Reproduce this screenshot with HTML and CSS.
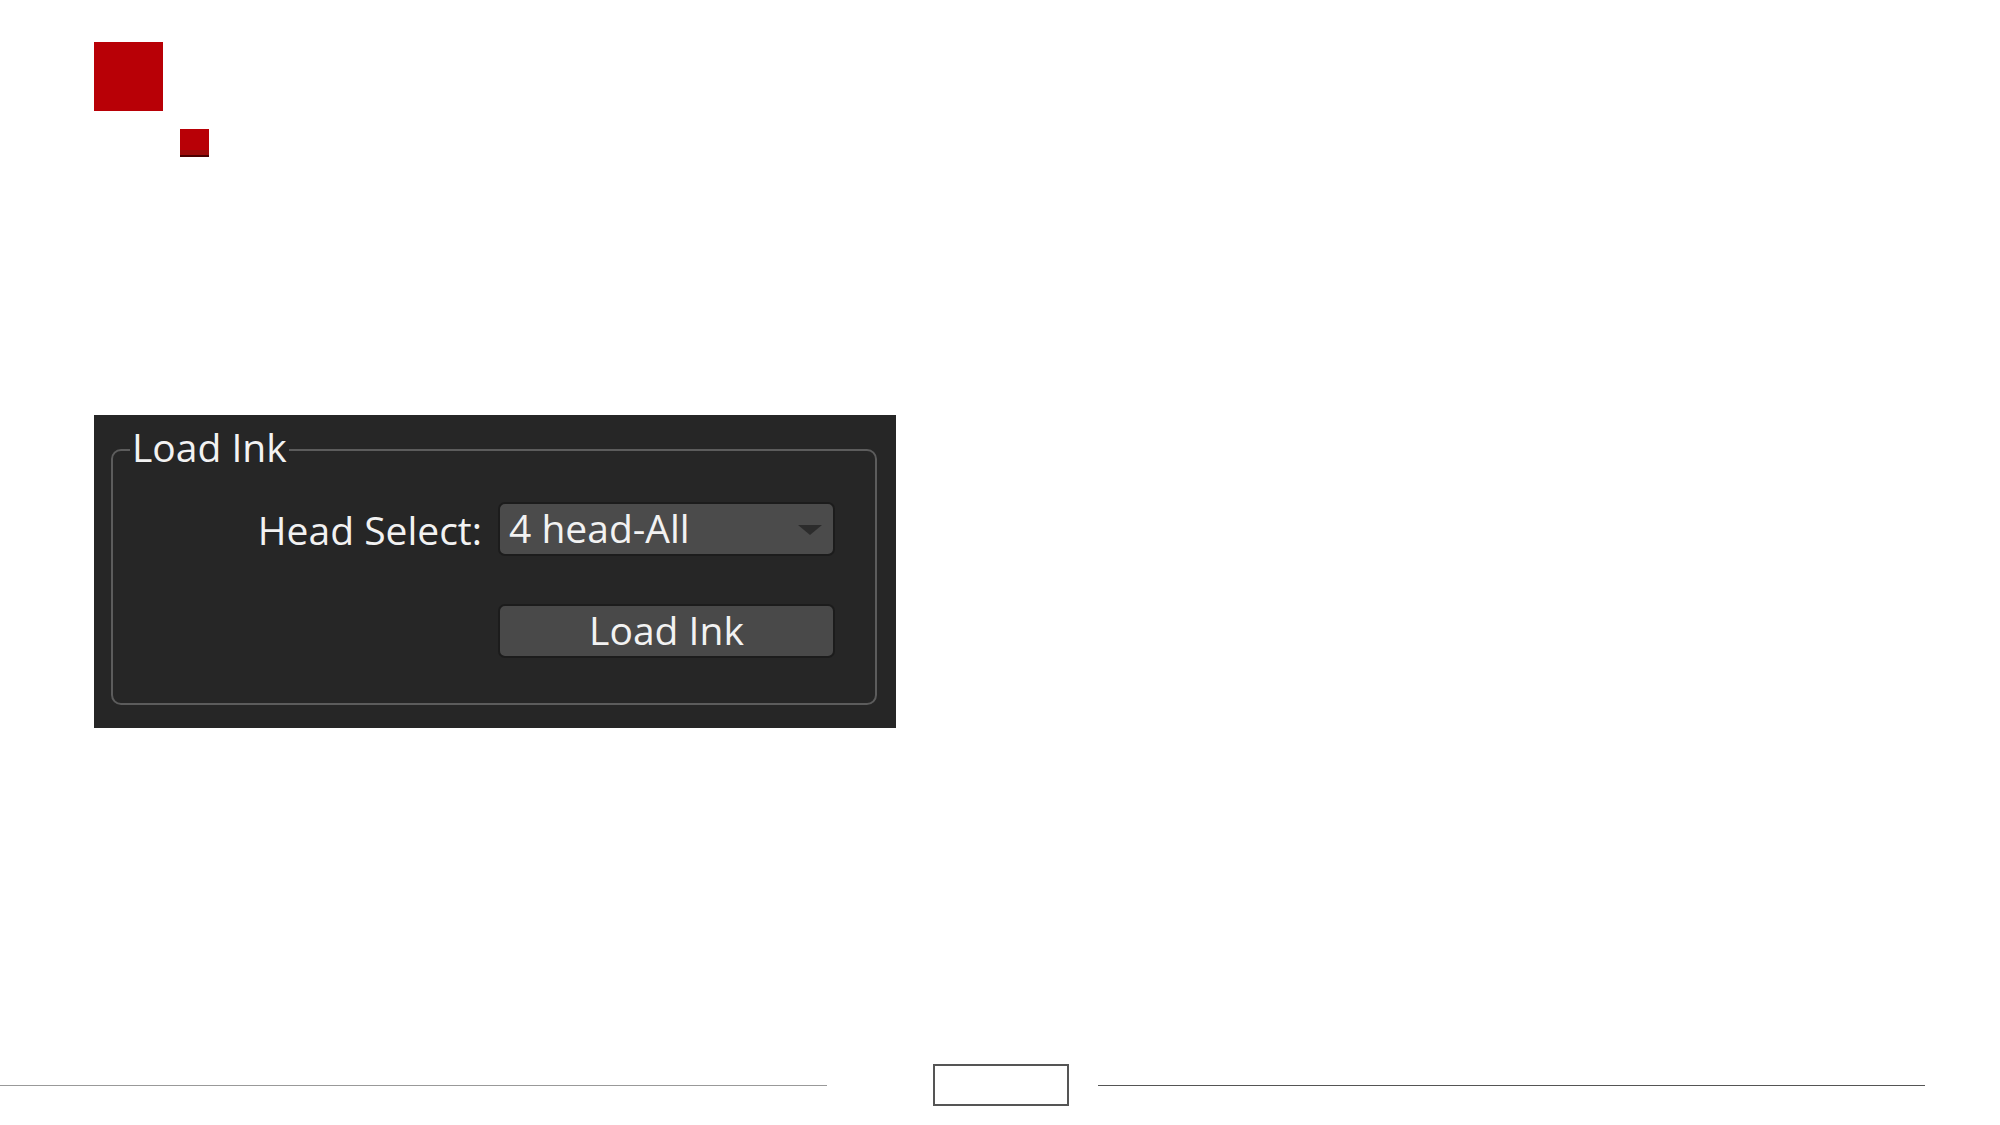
FILE: index.html
```html
<!DOCTYPE html>
<html lang="en">

<head>
    <meta charset="UTF-8">
    <meta name="viewport" content="width=device-width, initial-scale=1.0">
    <title>Load Ink</title>
    <link rel="stylesheet" href="styles.css">
</head>

<body>
    <div class="page">
        <div class="head">
            <div class="mark-big"></div>
            <div class="mark-small"></div>
        </div>

        <div class="panel">
            <fieldset class="group">
                <legend>Load Ink</legend>
                <div class="row">
                    <span class="label">Head Select:</span>
                    <div class="select">
                        <span>4 head-All</span>
                        <span class="arrow"></span>
                    </div>
                </div>
                <div class="row">
                    <button class="btn">Load Ink</button>
                </div>
            </fieldset>
        </div>

        <div class="footer">
            <div class="line line-left"></div>
            <div class="page-box"></div>
            <div class="line line-right"></div>
        </div>
    </div>
</body>

</html>
```

FILE: styles.css
```css
body {
    margin: 0;
    background-color: #ffffff;
    font-family: "Open Sans", "Noto Sans", sans-serif;
}

.page {
    height: 1125px;
    display: flex;
    flex-direction: column;
}

.head {
    padding-left: 94px;
    padding-top: 42px;
}

.mark-big {
    width: 69px;
    height: 69px;
    background-color: #b80006;
}

.mark-small {
    width: 29px;
    height: 26px;
    margin-top: 18px;
    margin-left: 86px;
    background: linear-gradient(#b80006 82%, #9c0b0b 82%);
    border-bottom: 2px solid #4a0000;
}

.panel {
    width: 802px;
    height: 313px;
    box-sizing: border-box;
    margin-top: 258px;
    margin-left: 94px;
    padding: 12px 19px 23px 17px;
    background-color: #262626;
}

.group {
    margin: 0;
    min-width: 0;
    height: 100%;
    box-sizing: border-box;
    padding: 0 40px 0 0;
    border: 2px solid #5c5c5c;
    border-radius: 10px;
}

.group legend {
    margin-left: 17px;
    padding: 0 2px 6px 2px;
    font-size: 39px;
    line-height: 40px;
    color: #f2f2f2;
}

.row {
    display: flex;
    justify-content: flex-end;
    align-items: center;
    gap: 16px;
}

.row:first-of-type {
    margin-top: 29px;
}

.row + .row {
    margin-top: 48px;
}

.label {
    font-size: 39px;
    color: #f2f2f2;
}

.select {
    width: 337px;
    height: 54px;
    box-sizing: border-box;
    display: flex;
    align-items: center;
    justify-content: space-between;
    padding: 0 11px 4px 9px;
    background-color: #4b4b4b;
    border: 2px solid #1c1c1c;
    border-radius: 7px;
    font-size: 39px;
    color: #f2f2f2;
}

.arrow {
    width: 0;
    height: 0;
    margin-top: 6px;
    border-left: 12px solid transparent;
    border-right: 12px solid transparent;
    border-top: 10px solid #2c2c2c;
}

.btn {
    width: 337px;
    height: 54px;
    padding: 0 0 4px 0;
    background-color: #494949;
    border: 2px solid #1c1c1c;
    border-radius: 7px;
    font-family: inherit;
    font-size: 39px;
    line-height: 1;
    color: #f2f2f2;
}

.footer {
    margin-top: auto;
    margin-bottom: 19px;
    display: flex;
    align-items: center;
}

.line {
    width: 827px;
    height: 1px;
}

.line-left {
    background-color: #999999;
}

.line-right {
    margin-left: 29px;
    background-color: #555555;
}

.page-box {
    width: 136px;
    height: 42px;
    box-sizing: border-box;
    margin-left: 106px;
    border: 2px solid #555555;
}
```
